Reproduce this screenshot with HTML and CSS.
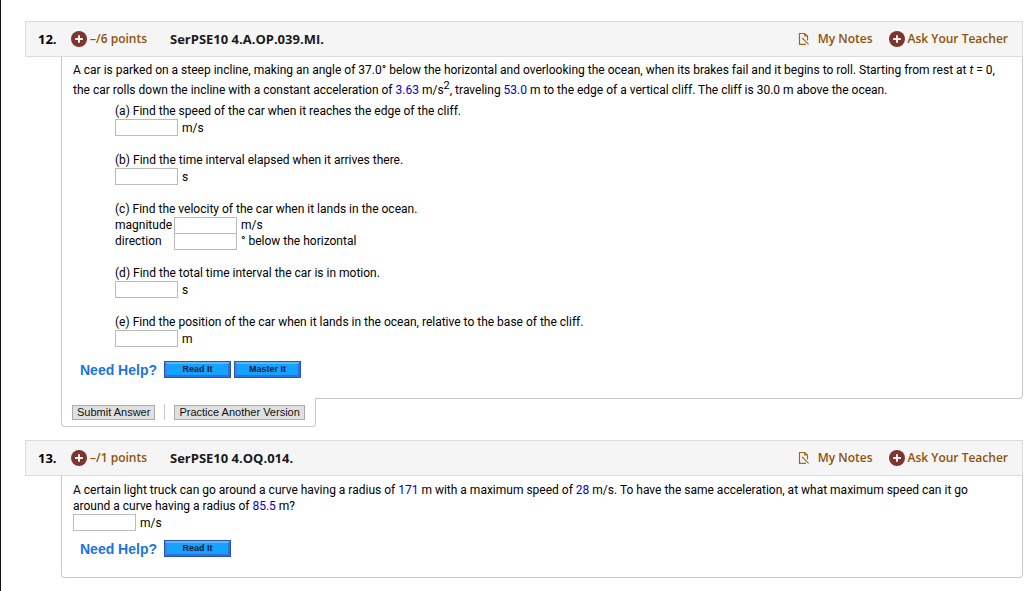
FILE: index.html
```html
<!doctype html>
<html lang="en">
<head>
<meta charset="utf-8">
<title>SerPSE10 Chapter 4</title>
<meta name="viewport" content="width=device-width, initial-scale=1.0">
<link rel="stylesheet" href="styles.css">
</head>

<body>

<svg class="sprite" aria-hidden="true">
  <symbol id="plus" viewBox="0 0 16 16">
    <circle cx="8" cy="8" r="8" fill="#7d3530"></circle>
    <path d="M8 4.2v7.6M4.2 8h7.6" stroke="#fff" stroke-width="1.8"></path>
  </symbol>
  <symbol id="note" viewBox="0 0 12 14">
    <path d="M9.5 8.5V4L6.7 1.5H1.5v10.8h6.5M6.7 1.5V4h2.8M4.8 6.6l5.8 5.8" fill="none" stroke="#a5671f" stroke-width="1.2"></path>
    <path d="M3.8 5.6l2.2.6-1.4 1.4z" fill="#a5671f"></path>
  </symbol>
</svg>

<main>
  <section class="question">
    <header class="questionHeader">
      <span class="number">12.</span>
      <a class="points" href="#"><svg class="plus"><use href="#plus"></use></svg>–/6 points</a>
      <h2>SerPSE10 4.A.OP.039.MI.</h2>
      <nav>
        <a href="#"><svg class="note"><use href="#note"></use></svg>My Notes</a>
        <a href="#"><svg class="plus"><use href="#plus"></use></svg>Ask Your Teacher</a>
      </nav>
    </header>

    <div class="panel hasTab">
      <p class="intro">A car is parked on a steep incline, making an angle of 37.0° below the horizontal and overlooking the ocean, when its brakes fail and it begins to roll. Starting from rest at <i>t</i> = 0, the car rolls down the incline with a constant acceleration of <span class="given">3.63</span> m/s<sup>2</sup>, traveling <span class="given">53.0</span> m to the edge of a vertical cliff. The cliff is 30.0 m above the ocean.</p>

      <div class="parts">
        <div class="part">
          <label for="a">(a) Find the speed of the car when it reaches the edge of the cliff.</label>
          <div class="answer"><input id="a" type="text"> m/s</div>
        </div>
        <div class="part">
          <label for="b">(b) Find the time interval elapsed when it arrives there.</label>
          <div class="answer"><input id="b" type="text"> s</div>
        </div>
        <div class="part">
          <p>(c) Find the velocity of the car when it lands in the ocean.</p>
          <div class="pair">
            <label for="c1">magnitude</label><input id="c1" type="text"><span>m/s</span>
            <label for="c2">direction</label><input id="c2" type="text"><span>° below the horizontal</span>
          </div>
        </div>
        <div class="part">
          <label for="d">(d) Find the total time interval the car is in motion.</label>
          <div class="answer"><input id="d" type="text"> s</div>
        </div>
        <div class="part">
          <label for="e">(e) Find the position of the car when it lands in the ocean, relative to the base of the cliff.</label>
          <div class="answer"><input id="e" type="text"> m</div>
        </div>
      </div>

      <div class="help">
        <strong>Need Help?</strong>
        <button class="helpButton" type="button">Read It</button>
        <button class="helpButton" type="button">Master It</button>
      </div>
    </div>

    <div class="tab">
      <button type="button">Submit Answer</button>
      <span class="divider"></span>
      <button type="button">Practice Another Version</button>
    </div>
  </section>

  <section class="question">
    <header class="questionHeader">
      <span class="number">13.</span>
      <a class="points" href="#"><svg class="plus"><use href="#plus"></use></svg>–/1 points</a>
      <h2>SerPSE10 4.OQ.014.</h2>
      <nav>
        <a href="#"><svg class="note"><use href="#note"></use></svg>My Notes</a>
        <a href="#"><svg class="plus"><use href="#plus"></use></svg>Ask Your Teacher</a>
      </nav>
    </header>

    <div class="panel">
      <label for="speed">A certain light truck can go around a curve having a radius of <span class="given">171</span> m with a maximum speed of <span class="given">28</span> m/s. To have the same acceleration, at what maximum speed can it go around a curve having a radius of <span class="given">85.5</span> m?</label>
      <div class="answer"><input id="speed" type="text"> m/s</div>

      <div class="help">
        <strong>Need Help?</strong>
        <button class="helpButton" type="button">Read It</button>
      </div>
    </div>
  </section>
</main>

</body>
</html>
```
FILE: styles.css
```css
* {
  box-sizing: border-box;
}
body {
  margin: 0;
  min-height: 100vh;
  border-left: 1px solid #111;
  background: #fff;
  color: #000;
  font: 12px/16px Roboto, sans-serif;
}
main {
  padding: 21px 1px 14px 24px;
}
p, h2 {
  margin: 0;
}
label {
  display: block;
}
.sprite {
  display: none;
}
.question + .question {
  margin-top: 13px;
}

/* header bar */
.questionHeader {
  display: flex;
  align-items: center;
  height: 36px;
  padding: 0 14px 0 12px;
  border: 1px solid #dcdcdc;
  background: #f5f5f5;
  font: bold 13px/18px "Open Sans", sans-serif;
}
.questionHeader h2 {
  font-size: 13px;
  color: #1a1a1a;
}
.questionHeader a {
  display: flex;
  align-items: center;
  gap: 3px;
  color: #8f5209;
  font-size: 12px;
  font-weight: 600;
  line-height: 20px;
  text-decoration: none;
}
.questionHeader nav {
  display: flex;
  gap: 16px;
  margin-left: auto;
}
.questionHeader .number {
  width: 33px;
}
.questionHeader .points {
  width: 99px;
}
.plus {
  width: 16px;
  height: 16px;
}
.note {
  width: 12px;
  height: 14px;
  margin-right: 5px;
}

/* question body */
.panel {
  margin-left: 36px;
  padding: 6px 16px 20px 11px;
  border: 1px solid #c8c8c8;
  border-top: 0;
  border-radius: 0 0 4px 4px;
}
.panel.hasTab {
  padding-top: 3px;
  border-bottom-left-radius: 0;
}
.intro {
  line-height: 20px;
}
.given {
  color: #0000d8;
}
sup {
  font-size: 11px;
  line-height: 0;
}
.parts {
  display: flex;
  flex-direction: column;
  gap: 16px;
  margin: 3px 0 14px 42px;
}
.answer {
  display: flex;
  align-items: center;
  gap: 4px;
  height: 17px;
}
input {
  width: 63px;
  height: 17px;
  padding: 1px 3px;
  border: 1px solid #bbb;
  background: #fff;
  font: inherit;
}
.pair {
  display: grid;
  grid-template-columns: 59px 63px auto;
  grid-auto-rows: 16px;
}
.pair span {
  padding-left: 4px;
}
.help {
  display: flex;
  align-items: center;
  gap: 3px;
  margin: 9px 0 0 7px;
  font-family: Arial, "Liberation Sans", sans-serif;
}
.help strong {
  margin-right: 4px;
  color: #1a73e8;
  font-size: 14px;
}
.helpButton {
  width: 67px;
  height: 17px;
  padding: 0;
  border: 3px solid;
  border-color: #62b5f5 #2f6fe0 #2f6fe0 #3f7fe8;
  outline: 1px solid #2456b8;
  outline-offset: -1px;
  background: #14a3ff;
  color: #0a1a3c;
  font: bold 9px/11px Arial, "Liberation Sans", sans-serif;
}

/* sits over the panel's bottom line */
.tab {
  position: relative;
  display: flex;
  align-items: center;
  width: fit-content;
  height: 29px;
  margin: -1px 0 0 36px;
  padding: 0 10px;
  border: 1px solid #c8c8c8;
  border-top: 0;
  border-radius: 0 0 4px 4px;
  background: #fff;
}
.tab button {
  height: 15px;
  padding: 0 4px;
  border: 1px solid #aaa;
  background: #e0e0e0;
  color: #111;
  font: 11px/13px Arial, "Liberation Sans", sans-serif;
}
.divider {
  height: 16px;
  margin: 0 9px;
  border-left: 1px solid #ccc;
}
```
